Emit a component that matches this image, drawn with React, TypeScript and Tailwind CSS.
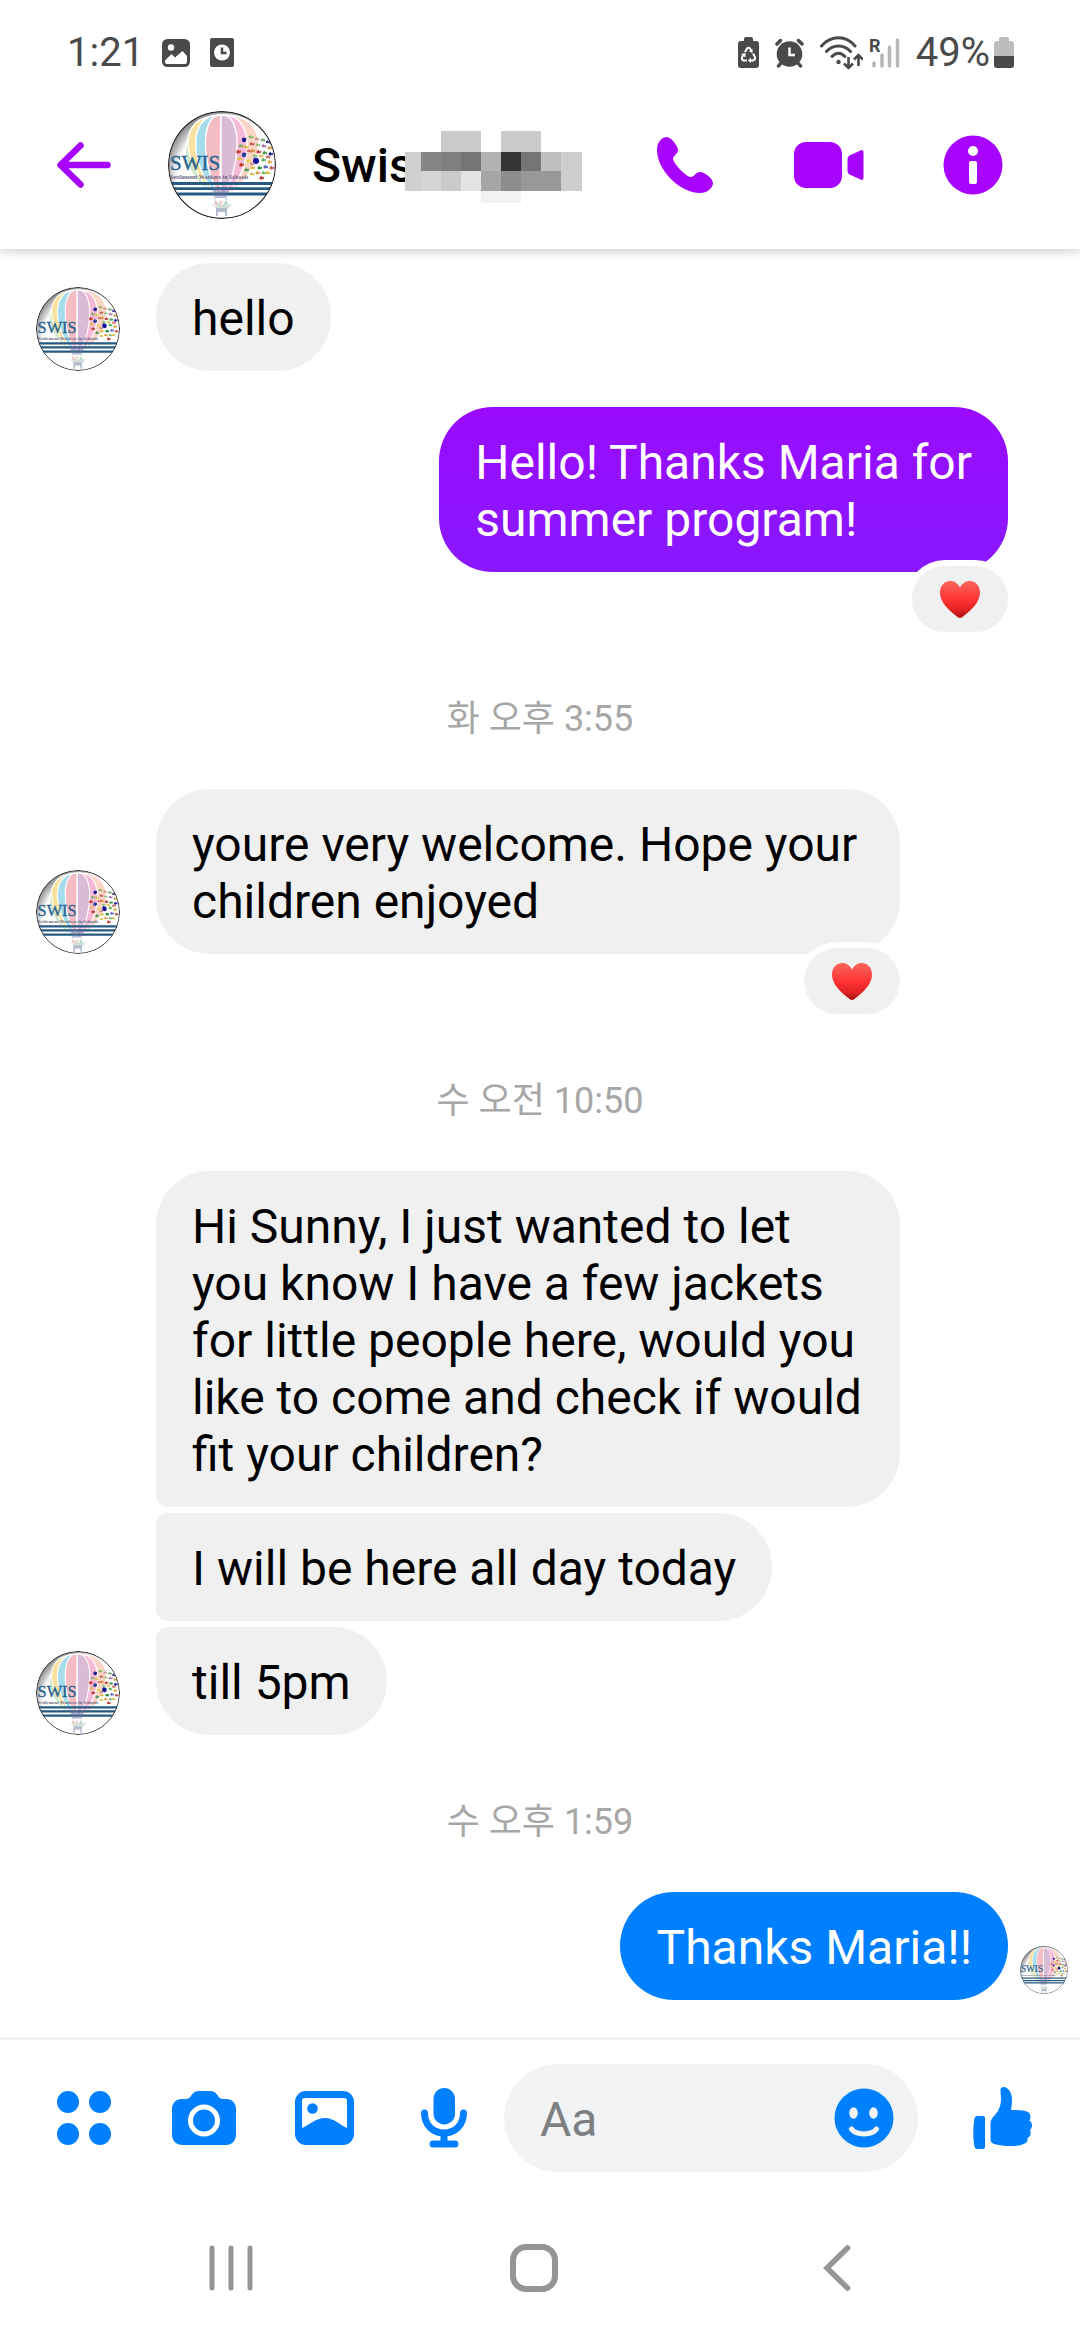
import React, { useId, useState } from 'react';
import clsx from 'clsx';

type Message = {
  id: number;
  from: 'me' | 'them';
  text: string;
  time?: string;
  hearted?: boolean;
  showAvatar?: boolean;
  seen?: boolean;
  shape: string;
};

const messages: Message[] = [
  { id: 1, from: 'them', text: 'hello', showAvatar: true, shape: 'mt-0 rounded-[54px]' },
  {
    id: 2,
    from: 'me',
    text: 'Hello! Thanks Maria for\nsummer program!',
    hearted: true,
    shape: 'mt-9 rounded-[54px] bg-linear-to-b from-[#9a09ff] to-[#8817ff]'
  },
  {
    id: 3,
    from: 'them',
    time: '화 오후 3:55',
    text: 'youre very welcome. Hope your children enjoyed',
    hearted: true,
    showAvatar: true,
    shape: 'rounded-[54px]'
  },
  {
    id: 4,
    from: 'them',
    time: '수 오전 10:50',
    text: 'Hi Sunny, I just wanted to let you know I have a few jackets for little people here, would you like to come and check if would fit your children?',
    shape: 'rounded-[54px] rounded-bl-xl'
  },
  {
    id: 5,
    from: 'them',
    text: 'I will be here all day today',
    shape: 'mt-1.5 rounded-[54px] rounded-l-xl'
  },
  {
    id: 6,
    from: 'them',
    text: 'till 5pm',
    showAvatar: true,
    shape: 'mt-1.5 rounded-[54px] rounded-tl-xl'
  },
  {
    id: 7,
    from: 'me',
    time: '수 오후 1:59',
    text: 'Thanks Maria!!',
    seen: true,
    shape: 'rounded-[54px] bg-[#007fff]'
  }
];

// Handprints in the tree on the school logo: x, y, radius, colour
const prints: [number, number, number, string][] = [
  [72, 35, 1.3, '#6fae5a'], [76, 29, 2.2, '#1d1d8f'], [82, 26, 1.3, '#7cb864'], [88, 28, 1.3, '#c99a8a'],
  [94, 29, 1.3, '#6aa86a'], [99, 31, 1.3, '#3a3a9a'], [70, 41, 1.7, '#c03a32'], [77, 36, 1.3, '#e0b93a'],
  [83, 33, 1.3, '#c4564c'], [89, 34, 1.3, '#8fc27a'], [95, 35, 1.3, '#a76cb0'], [101, 37, 1.5, '#c9a24a'],
  [76, 44, 2.3, '#2a3fa0'], [71, 48, 1.5, '#d8c040'], [84, 40, 1.6, '#dd8f3a'], [90, 41, 1.5, '#b9433c'],
  [96, 42, 1.5, '#4b9a50'], [102, 43, 1.6, '#26269a'], [73, 54, 1.7, '#c0392b'], [80, 50, 1.5, '#e7cf4a'],
  [88, 50, 3, '#15159a'], [95, 49, 1.6, '#63b05a'], [101, 51, 1.5, '#e0a83a'], [78, 59, 1.6, '#4a9a54'],
  [84, 57, 1.5, '#d9b840'], [91, 57, 1.6, '#2f8f45'], [97, 56, 1.5, '#5a5fc0'], [103, 57, 1.5, '#b95a50'],
  [83, 63, 1.3, '#d0c050'], [89, 62, 1.4, '#d8a040'], [95, 62, 1.4, '#7bb86a'], [93, 67, 1.6, '#c0392b'],
  [99, 62, 1.4, '#d4c252'], [80, 40, 1.2, '#d46a60'], [86, 45, 1.2, '#8fc27a'], [92, 45, 1.2, '#e0c050'],
  [83, 53, 1.2, '#c98a8a'], [99, 46, 1.2, '#c96a5a']
];

const Avatar = ({ className }: { className: string }) => {
  const id = useId();
  return (
    <svg viewBox="0 0 108 108" className={clsx('shrink-0 rounded-full', className)} role="img" aria-label="SWIS">
      <defs>
        <clipPath id={`${id}-clip`}>
          <circle cx="54" cy="54" r="53.5" />
        </clipPath>
        <radialGradient id={`${id}-shade`} cx="0.6" cy="0.62" r="0.68">
          <stop offset="0.76" stopColor="#fff" />
          <stop offset="1" stopColor="#6a6a6a" />
        </radialGradient>
      </defs>
      <g clipPath={`url(#${id}-clip)`}>
        <rect width="108" height="108" fill={`url(#${id}-shade)`} />
        {/* Balloon */}
        <g stroke="#fff" strokeWidth="1.4">
          <path d="M50 10C8 14 6 58 48 86Z" fill="#cfe6c8" />
          <path d="M51 5C8 4 12 52 49 86Z" fill="#f9e2a0" />
          <path d="M51 4C20 4 20 52 50 86Z" fill="#a5dcec" />
          <path d="M53 4C33 2 32 52 52 86Z" fill="#f4bcc3" />
          <path d="M54 4C104 2 100 56 58 86Z" fill="#fad5c8" />
          <path d="M54 4C86 2 88 54 57 86Z" fill="#f7bad6" />
          <path d="M53 4C74 2 74 52 55 86H53Z" fill="#d9bbd5" />
        </g>
        {/* Tree */}
        {prints.map(([x, y, r, fill], i) => (
          <g key={i} fill={fill}>
            <circle cx={x} cy={y} r={r} />
            <path d={`M${x - r - 1} ${y - r}l2 1 1-2 1 2 2-1-1 3z`} />
          </g>
        ))}
        <text x="2" y="59" fontSize="21" fill="#27638e" stroke="#27638e" strokeWidth="0.4" className="font-['Liberation_Serif',serif]">
          SWIS
        </text>
        <text x="2" y="68" fontSize="6" fill="#6b6480" className="font-['Liberation_Serif',serif] font-bold">
          Settlement Workers in Schools
        </text>
        <path d="M0 72.5H108M0 77.7H108M0 83H108" stroke="#255b83" strokeWidth="2.8" />
        <path d="M43 76H62L58 87H47Z" fill="#6a6fa0" opacity="0.45" />
        <path d="M46 86L49 94M59 86L57 94" stroke="#c9d2e0" strokeWidth="1" />
        {/* Basket */}
        <path d="M43 92l5 3 3-4 3 3 4-4 2 4 5-2-5 6H49z" fill="#d3dfd8" />
        <circle cx="48" cy="92" r="1.6" fill="#f2b8a8" />
        <circle cx="53" cy="91" r="1.6" fill="#f3c4cc" />
        <circle cx="58" cy="92" r="1.6" fill="#a8d8c8" />
        <path d="M48 97H59V105H57V101H50V105H48Z" fill="#b3bacd" />
      </g>
      <circle cx="54" cy="54" r="53.4" fill="none" stroke="#222" strokeWidth="1.2" />
    </svg>
  );
};

const Heart = () => {
  const id = useId();
  return (
    <svg viewBox="0 0 40 37" className="h-[37px] w-10" aria-hidden="true">
      <defs>
        <linearGradient id={id} x1="0" y1="0" x2="0" y2="1">
          <stop offset="0" stopColor="#f9665c" />
          <stop offset="0.5" stopColor="#ff3434" />
          <stop offset="0.8" stopColor="#e02222" />
          <stop offset="1" stopColor="#a30f0f" />
        </linearGradient>
      </defs>
      <path
        d="M20 6.5C17.5 2 14 0 10.5 0C4.500 0 0 4.500 0 11.500C0 22 9.500 29.500 17.500 36Q20 38 22.500 36C30.500 29.500 40 22 40 11.500C40 4.500 35.500 0 29.500 0C26 0 22.500 2 20 6.500Z"
        fill={`url(#${id})`} />
    </svg>
  );
};

const StatusBar = () => (
  <div className="relative z-20 flex h-[81px] items-center justify-between bg-white pt-6 pr-[66px] pl-[67px] text-[40px] leading-none text-[#4a4a4a]">
    <div className="flex items-center">
      <span>1:21</span>
      <svg viewBox="0 0 28 28" className="ml-[18px] size-7" aria-hidden="true">
        <rect width="28" height="28" rx="5.500" fill="currentColor" />
        <circle cx="9" cy="8.500" r="3.200" fill="#fff" />
        <path d="M3 21.500L9.500 15L13 18.500L20.500 12L25 17V23Q25 25 23 25H5Q3 25 3 23Z" fill="#fff" />
      </svg>
      <svg viewBox="0 0 24 29" className="ml-5 h-[29px] w-6" aria-hidden="true">
        <rect width="24" height="29" rx="2" fill="currentColor" />
        <circle cx="12" cy="14.500" r="8" fill="#fff" />
        <path d="M12 9.500V15H16.500" fill="none" stroke="currentColor" strokeWidth="2.500" />
      </svg>
    </div>
    <div className="flex items-center">
      <svg viewBox="0 0 21 31" className="h-[31px] w-[21px]" aria-hidden="true">
        <path d="M6 4V2Q6 0 8 0H13Q15 0 15 2V4H18Q21 4 21 7V28Q21 31 18 31H3Q0 31 0 28V7Q0 4 3 4Z" fill="currentColor" />
        <path d="M7 15L9 11.500Q10.500 10 12 11.500L13.500 14M15 16.500L17 20Q17.500 23 15 23.500H12M9 23.500H5.500Q3.500 23 4 20.500L5.500 17.500" fill="none" stroke="#fff" strokeWidth="2" />
        <path d="M14.500 11.500V16L11 14.500ZM13 20.500V26L10 23.500ZM3 17L7.500 16L7.500 20.500Z" fill="#fff" />
      </svg>
      <svg viewBox="0 0 29 30" className="ml-4 h-[30px] w-[29px]" aria-hidden="true">
        <circle cx="14.500" cy="16" r="12.800" fill="currentColor" />
        <path d="M2 6L5.500 2.500M27 6L23.500 2.500M6 25L3.500 28M23 25L25.500 28" stroke="currentColor" strokeWidth="3.500" strokeLinecap="round" />
        <path d="M14.500 9.500V17H20" fill="none" stroke="#fff" strokeWidth="2.500" />
      </svg>
      <svg viewBox="0 0 43 34" className="ml-4 h-[34px] w-[43px]" fill="none" stroke="currentColor" aria-hidden="true">
        <path d="M1.500 10C11 -1 26 -1 35 10M6.500 15.500C13 8 24 8 30.500 15.500M12 20.500C16 16 21 16 25 20.500" strokeWidth="3" strokeLinecap="round" />
        <circle cx="18.500" cy="26" r="2.200" fill="currentColor" stroke="none" />
        <path d="M28.500 21V32M24 27.500L28.500 32L33 27.500M38.500 30V19M34 23.500L38.500 19L43 23.500" strokeWidth="2.600" />
      </svg>
      <svg viewBox="0 -6 31 42" className="ml-1.5 h-[42px] w-[31px]" aria-hidden="true">
        <text x="0" y="14" fontSize="18" fill="currentColor" className="font-bold">R</text>
        <path d="M5 25V28M13 17V28M20.500 9V28M28.500 2V28" stroke="#b8b8b8" strokeWidth="3.500" strokeLinecap="round" />
      </svg>
      <span className="ml-4">49%</span>
      <svg viewBox="0 0 20 31" className="ml-1 h-[31px] w-5" aria-hidden="true">
        <path d="M5 4V2Q5 0 7 0H13Q15 0 15 2V4H17Q20 4 20 7V19H0V7Q0 4 3 4Z" fill="#bdbdbd" />
        <path d="M0 19H20V28Q20 31 17 31H3Q0 31 0 28Z" fill="currentColor" />
      </svg>
    </div>
  </div>
);

// Pixelated block that hides the rest of the contact name: x, y, width, height, colour
const mosaic: [number, number, number, number, string][] = [
  [36, 0, 40, 21, '#cacaca'], [96, 0, 40, 21, '#cacaca'],
  [0, 21, 16, 39, '#cfcfcf'], [16, 21, 20, 19, '#868686'], [36, 21, 20, 19, '#808080'],
  [56, 21, 20, 19, '#757575'], [76, 21, 20, 19, '#b3b3b3'], [96, 21, 20, 19, '#343434'],
  [116, 21, 20, 19, '#757575'], [136, 21, 20, 19, '#bfbfbf'], [156, 21, 21, 39, '#cecece'],
  [16, 40, 20, 20, '#d5d5d5'], [36, 40, 20, 20, '#cacaca'], [56, 40, 20, 20, '#e4e4e4'],
  [76, 40, 20, 20, '#a6a6a6'], [96, 40, 20, 20, '#8d8d8d'], [116, 40, 40, 20, '#989898'],
  [76, 60, 40, 12, '#f2f2f2']
];

const Header = () => (
  <header className="relative z-10 flex h-[168px] items-center bg-white pr-[35px] pl-6 text-[#a803ff] shadow-[0_3px_10px_rgba(0,0,0,0.18)]">
    <button type="button" aria-label="Back" className="flex h-[120px] w-[120px] items-center justify-center">
      <svg viewBox="0 0 54 46" className="h-[46px] w-[54px]" fill="none" stroke="currentColor" strokeWidth="6.500" strokeLinecap="round" strokeLinejoin="round">
        <path d="M50.500 23H4M23.500 3.500L3.500 23L23.500 42.500" />
      </svg>
    </button>
    <Avatar className="ml-6 size-[108px]" />
    <div className="relative ml-9 flex-1">
      <h1 className="text-[48px] leading-[57px] font-medium text-black">Swis</h1>
      <svg viewBox="0 0 177 72" className="absolute -top-1.5 left-[93px] h-[72px] w-[177px]" shapeRendering="crispEdges" aria-hidden="true">
        {mosaic.map(([x, y, w, h, fill], i) => (
          <rect key={i} x={x} y={y} width={w} height={h} fill={fill} />
        ))}
      </svg>
    </div>
    <button type="button" aria-label="Call" className="flex h-36 w-36 items-center justify-center">
      <svg viewBox="0 0 56 56" className="size-14" fill="currentColor">
        <path d="M10 0C4 0 0 6 0 13C0 33 23 56 43 56C50 56 56 51 56 46C56 42 48 35 43 35C39 35 37 40 34 40C29 40 16 26 16 21.500C16 19 21 17 21 13C21 9 14 0 10 0Z" />
      </svg>
    </button>
    <button type="button" aria-label="Video call" className="flex h-36 w-36 items-center justify-center">
      <svg viewBox="0 0 70 46" className="h-[46px] w-[70px]" fill="currentColor">
        <rect width="48" height="46" rx="12" />
        <path d="M53.500 17Q53.500 14.500 55.500 13.500L66.500 8.500Q69.500 7 69.500 10.500V35.500Q69.500 39 66.500 37.500L55.500 32.500Q53.500 31.500 53.500 29Z" />
      </svg>
    </button>
    <button type="button" aria-label="Info" className="flex h-36 w-36 items-center justify-center">
      <svg viewBox="0 0 60 60" className="size-[60px]">
        <circle cx="30" cy="30" r="29.500" fill="currentColor" />
        <circle cx="30" cy="16" r="5" fill="#fff" />
        <rect x="26" y="26" width="8" height="23" rx="2" fill="#fff" />
      </svg>
    </button>
  </header>
);

const MessageRow = ({ message }: { message: Message }) => {
  const mine = message.from === 'me';
  return (
    <>
      {message.time &&
        <time className="block pt-[66px] pb-12 text-center text-[36px] leading-[43px] text-[#a7a7a7]">{message.time}</time>
      }
      <div
        className={clsx(
          'flex items-end',
          mine ? 'justify-end pr-3' : 'pl-9',
          message.hearted && 'mb-[60px]'
        )}>

        {!mine && <div className="mr-9 w-21 shrink-0">{message.showAvatar && <Avatar className="size-21" />}</div>}
        <div
          className={clsx(
            'relative max-w-[744px] px-9 pt-[27px] pb-6 text-[48px] leading-[57px] whitespace-pre-line',
            mine ? 'text-white' : 'bg-[#f0f0f0] text-black',
            message.shape
          )}>

          {message.text}
          {message.hearted &&
            <span className="absolute right-0 -bottom-[60px] flex h-[66px] w-24 items-center justify-center rounded-full bg-[#f0f0f0] ring-6 ring-white">
              <Heart />
            </span>
          }
        </div>
        {mine && <div className="mb-1.5 ml-3 w-12 shrink-0">{message.seen && <Avatar className="size-12" />}</div>}
      </div>
    </>
  );
};

const Composer = () => {
  const [draft, setDraft] = useState('');
  return (
    <form
      onSubmit={(e) => e.preventDefault()}
      className="flex items-center border-t-3 border-[#f0f0f0] py-6 pr-1.5 pl-6 text-[#007fff]">

      <button type="button" aria-label="More" className="flex h-27 w-30 shrink-0 items-center justify-center">
        <svg viewBox="0 0 54 54" className="size-[54px]" fill="currentColor">
          <circle cx="11" cy="11" r="11" />
          <circle cx="43" cy="11" r="11" />
          <circle cx="11" cy="43" r="11" />
          <circle cx="43" cy="43" r="11" />
        </svg>
      </button>
      <button type="button" aria-label="Camera" className="flex h-27 w-30 shrink-0 items-center justify-center">
        <svg viewBox="0 0 64 54" className="h-[54px] w-16">
          <path d="M10 8H13C17 8 18 6.500 20 3.500C22 1 23.500 0 27 0H38C41 0 43 1 45 3.500C47 6.500 48 8 52 8H54C60 8 64 12 64 18V43C64 50 60 54 54 54H11C4 54 0 50 0 43V18C0 12 4 8 10 8Z" fill="currentColor" />
          <circle cx="32" cy="29.500" r="13.500" fill="none" stroke="#fff" strokeWidth="5" />
        </svg>
      </button>
      <button type="button" aria-label="Gallery" className="flex h-27 w-30 shrink-0 items-center justify-center">
        <svg viewBox="0 0 59 54" className="h-[54px] w-[59px]">
          <rect width="59" height="54" rx="11" fill="currentColor" />
          <path d="M7 10Q7 7 10 7H49Q52 7 52 10V37C45 34 39 27 30 27S14 34 7 37Z" fill="#fff" />
          <circle cx="17.500" cy="17.500" r="5.300" fill="currentColor" />
        </svg>
      </button>
      <button type="button" aria-label="Voice message" className="flex h-27 w-30 shrink-0 items-center justify-center">
        <svg viewBox="0 0 46 60" className="h-[60px] w-[46px]" fill="currentColor">
          <rect x="12.500" width="21.500" height="36.500" rx="10.700" />
          <path d="M3.500 25C3.500 37 12 45 23 45S42.500 37 42.500 25" fill="none" stroke="currentColor" strokeWidth="7" strokeLinecap="round" />
          <rect x="19.500" y="46" width="7" height="9" />
          <rect x="8.500" y="52.500" width="29" height="7" rx="3.500" />
        </svg>
      </button>
      <div className="flex h-27 min-w-0 flex-1 items-center rounded-full bg-[#f1f3f5] pr-6 pl-9">
        <input
          type="text"
          aria-label="Message"
          value={draft}
          onChange={(e) => setDraft(e.target.value)}
          placeholder="Aa"
          className="min-w-0 flex-1 bg-transparent pt-0.5 text-[48px] leading-[57px] text-black placeholder-[#7d7f81] focus:outline-none" />

        <button type="button" aria-label="Emoji" className="shrink-0">
          <svg viewBox="0 0 60 60" className="size-[60px]">
            <circle cx="30" cy="30" r="29.500" fill="currentColor" />
            <ellipse cx="19.500" cy="25" rx="4.300" ry="5.700" fill="#f1f3f5" />
            <ellipse cx="39.500" cy="25" rx="4.300" ry="5.700" fill="#f1f3f5" />
            <path d="M17.500 41C22 47.500 38 47.500 42.500 41" fill="none" stroke="#f1f3f5" strokeWidth="5" strokeLinecap="round" />
          </svg>
        </button>
      </div>
      <button type="submit" aria-label="Like" className="ml-3 flex h-27 w-36 shrink-0 items-center justify-center">
        <svg viewBox="0 0 59 62" className="h-[62px] w-[59px]" fill="currentColor">
          <path d="M4 29H10Q12 29 12 31V60Q12 62 10 62H4C2 62 1.500 60 1 57C0 50 0 42 1 34Q1.500 29 4 29Z" />
          <path d="M27.500 3C27.500 0 30 0 31 0C36 1 39 6 39 13C39 17 38.500 20 38 23C46 23 52 23.500 55 25C58 27 58 31 56.500 33.500C60 36 59.500 41 57 43C58.500 46 57.500 50 54.500 51C55.500 55 52 57 48 58C40 60 28 59 21 57C18 56 17.500 54 17.500 51V37C17.500 33 19 31 22 28C26 23.500 28 18 28 12Z" />
        </svg>
      </button>
    </form>
  );
};

const NavBar = () => (
  <nav className="grid h-36 grid-cols-3 place-items-center pr-[92px] pl-20 text-[#959595]">
    <button type="button" aria-label="Recents">
      <svg viewBox="0 0 44 46" className="h-[46px] w-11" stroke="currentColor" strokeWidth="5" strokeLinecap="round">
        <path d="M3 3V43M22 3V43M41 3V43" />
      </svg>
    </button>
    <button type="button" aria-label="Home">
      <svg viewBox="0 0 48 48" className="size-12" fill="none" stroke="currentColor" strokeWidth="6">
        <rect x="3" y="3" width="42" height="42" rx="13" />
      </svg>
    </button>
    <button type="button" aria-label="Go back">
      <svg viewBox="0 0 28 46" className="h-[46px] w-7" fill="none" stroke="currentColor" strokeWidth="5.500" strokeLinecap="round">
        <path d="M24.500 3L4 23L24.500 43" />
      </svg>
    </button>
  </nav>
);

export default function App() {
  return (
    <div className="flex min-h-screen flex-col bg-white font-['Roboto','Noto_Sans_CJK_KR',sans-serif]">
      <StatusBar />
      <Header />
      <main className="flex-1 pt-3.5 pb-[37px]">
        {messages.map((message) => (
          <MessageRow key={message.id} message={message} />
        ))}
      </main>
      <Composer />
      <NavBar />
    </div>
  );
}
